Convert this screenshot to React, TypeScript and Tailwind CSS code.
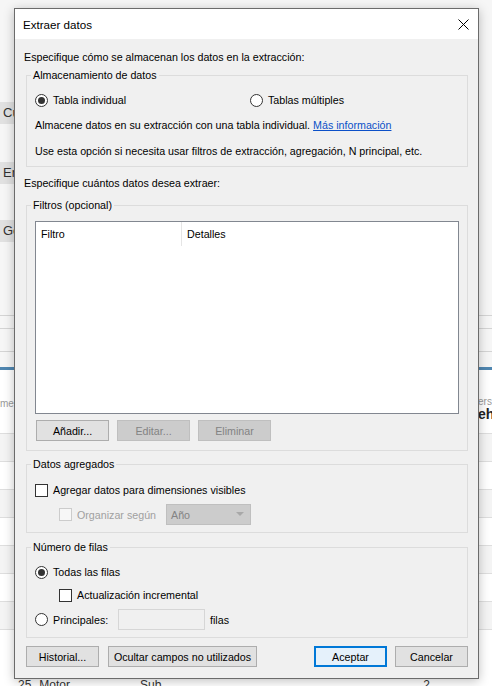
import React from "react";

const font = { fontFamily: '"Liberation Sans", Arial, sans-serif' };

function Radio({ checked }: { checked?: boolean }) {
  return (
    <span className="flex h-[13px] w-[13px] shrink-0 items-center justify-center rounded-full border border-[#333333] bg-white">
      {checked && <span className="h-[7px] w-[7px] rounded-full bg-[#333333]" />}
    </span>
  );
}

function Check({ disabled }: { disabled?: boolean }) {
  return (
    <span
      className={
        disabled
          ? "h-[13px] w-[13px] shrink-0 border border-[#cccccc] bg-[#f7f7f7]"
          : "h-[13px] w-[13px] shrink-0 border border-[#333333] bg-white"
      }
    />
  );
}

function Btn({ label, w, disabled, primary }: { label: string; w: string; disabled?: boolean; primary?: boolean }) {
  let cls = "border-[#adadad] bg-[#e1e1e1] text-black";
  if (disabled) cls = "border-[#bfbfbf] bg-[#cccccc] text-[#838383]";
  if (primary) cls = "border-2 border-[#0078d7] bg-[#e5f1fb] text-black";
  return (
    <div className={`flex h-[21px] shrink-0 items-center justify-center border ${cls} ${w}`}>
      <span>{label}</span>
    </div>
  );
}

function Group({ title, className, children }: { title: string; className?: string; children: React.ReactNode }) {
  return (
    <fieldset className={`mx-[2px] border border-[#dcdcdc] px-[8px] ${className ?? ""}`}>
      <legend className="-ml-[4px] h-[16px] px-[2px] leading-[16px]">{title}</legend>
      {children}
    </fieldset>
  );
}

// pestañas de la ventana de fondo, tapadas casi del todo por el diálogo
function SideTab({ label }: { label: string }) {
  return (
    <div className="flex h-[22px] items-center">
      <div className="flex h-full w-[14px] items-center overflow-hidden whitespace-nowrap bg-[#e1e1e1] pl-[3px]">
        {label}
      </div>
    </div>
  );
}

function Background() {
  return (
    <div className="flex flex-col text-[13px] text-[#333]">
      <div className="h-[102px]" />
      <SideTab label="Cu" />
      <div className="h-[38px]" />
      <SideTab label="En" />
      <div className="h-[36px]" />
      <SideTab label="Ge" />
      <div className="h-[73px]" />
      <div className="h-[13px] border-t border-[#d4d4d4]" />
      <div className="h-[23px] border-t border-[#d4d4d4]" />
      <div className="h-[16px] border-t border-[#d4d4d4]" />
      <div className="h-[3px] bg-[#4f86b0]" />
      <div className="flex h-[63px] bg-white">
        <div className="w-[14px] overflow-hidden pt-[26px] text-[10px] text-[#9a9a9a]">me</div>
        <div className="flex-1" />
        <div className="w-[14px] overflow-hidden pt-[26px] leading-[12px]">
          <div className="text-[10px] text-[#9a9a9a]">ers</div>
          <div className="text-[14px] font-bold text-[#222]">eh</div>
        </div>
      </div>
      <div className="h-[28px] border-t border-[#dedede] bg-[#f4f4f4]" />
      <div className="h-[28px] border-t border-[#dedede] bg-white" />
      <div className="h-[28px] border-t border-[#dedede] bg-[#f4f4f4]" />
      <div className="h-[28px] border-t border-[#dedede] bg-white" />
      <div className="h-[28px] border-t border-[#dedede] bg-[#f4f4f4]" />
      <div className="h-[28px] border-t border-[#dedede] bg-white" />
      <div className="h-[28px] border-t border-[#dedede] bg-[#f4f4f4]" />
      <div className="h-[28px] border-t border-[#dedede] bg-white" />
      <div className="flex h-[40px] items-start bg-white pt-[22px] text-[12px] leading-[12px]">
        <span className="ml-[18px]">25</span>
        <span className="ml-[8px]">Motor</span>
        <span className="ml-[70px]">Sub</span>
        <span className="ml-auto mr-[62px]">2</span>
      </div>
    </div>
  );
}

export default function App() {
  return (
    <div className="relative h-[686px] w-[492px] overflow-hidden bg-[#f6f6f6]" style={font}>
      <Background />

      <div className="absolute left-[14px] top-[8px] flex h-[671px] w-[465px] flex-col border border-[#6b6b6b] bg-[#f0f0f0] text-[10.7px] leading-[16px] text-black shadow-[0_2px_10px_rgba(0,0,0,0.25)]">
        <div className="flex h-[30px] shrink-0 items-center justify-between bg-white pl-[8px] pr-[9px]">
          <span className="pt-[1px] text-[11.6px]">Extraer datos</span>
          <svg width="11" height="11" viewBox="0 0 11 11">
            <path d="M0.5 0.5 10.5 10.5M10.5 0.5 0.5 10.5" stroke="#000" strokeWidth="1" />
          </svg>
        </div>

        <div className="flex flex-1 flex-col pl-[9px] pr-[8px] pt-[10px]">
          <div className="h-[16px]">Especifique cómo se almacenan los datos en la extracción:</div>

          <Group title="Almacenamiento de datos" className="mt-[2px] pb-[7px]">
            <div className="mt-[9px] flex h-[16px] items-center">
              <div className="flex w-[215px] items-center gap-[5px]">
                <Radio checked />
                <span>Tabla individual</span>
              </div>
              <div className="flex items-center gap-[5px]">
                <Radio />
                <span>Tablas múltiples</span>
              </div>
            </div>
            <div className="mt-[9px] h-[16px]">
              Almacene datos en su extracción con una tabla individual.{" "}
              <span className="text-[#0b50c8] underline">Más información</span>
            </div>
            <div className="mt-[10px] h-[16px]">
              Use esta opción si necesita usar filtros de extracción, agregación, N principal, etc.
            </div>
          </Group>

          <div className="mt-[8px] h-[16px]">Especifique cuántos datos desea extraer:</div>

          <Group title="Filtros (opcional)" className="mt-[6px] pb-[9px]">
            <div className="mt-[8px] flex h-[193px] flex-col border border-[#828790] bg-white">
              <div className="flex h-[24px] items-center">
                <div className="flex h-full w-[146px] items-center border-r border-[#e5e5e5] pl-[5px]">Filtro</div>
                <div className="pl-[5px]">Detalles</div>
              </div>
            </div>
            <div className="mt-[6px] flex gap-[8px] pl-[1px]">
              <Btn label="Añadir..." w="w-[73px]" />
              <Btn label="Editar..." w="w-[73px]" disabled />
              <Btn label="Eliminar" w="w-[73px]" disabled />
            </div>
          </Group>

          <Group title="Datos agregados" className="mt-[5px] pb-[7px]">
            <div className="mt-[10px] flex h-[16px] items-center gap-[5px]">
              <Check />
              <span>Agregar datos para dimensiones visibles</span>
            </div>
            <div className="mt-[6px] flex h-[21px] items-center pl-[24px]">
              <Check disabled />
              <span className="ml-[5px] w-[89px] text-[#a0a0a0]">Organizar según</span>
              <div className="flex h-[21px] w-[85px] items-center justify-between border border-[#bfbfbf] bg-[#cccccc] pl-[4px] pr-[6px] text-[#838383]">
                <span>Año</span>
                <svg width="8" height="5" viewBox="0 0 8 5">
                  <path d="M0 0h8L4 4z" fill="#a8a8a8" />
                </svg>
              </div>
            </div>
          </Group>

          <Group title="Número de filas" className="mt-[6px] pb-[7px]">
            <div className="mt-[9px] flex h-[16px] items-center gap-[5px]">
              <Radio checked />
              <span>Todas las filas</span>
            </div>
            <div className="mt-[7px] flex h-[16px] items-center gap-[5px] pl-[24px]">
              <Check />
              <span>Actualización incremental</span>
            </div>
            <div className="mt-[6px] flex h-[21px] items-center">
              <Radio />
              <span className="ml-[5px] w-[65px]">Principales:</span>
              <div className="h-[21px] w-[87px] border border-[#d6d6d6] bg-[#f0f0f0]" />
              <span className="ml-[5px]">filas</span>
            </div>
          </Group>

          <div className="mx-[2px] mt-[8px] flex">
            <Btn label="Historial..." w="w-[73px]" />
            <Btn label="Ocultar campos no utilizados" w="ml-[9px] w-[149px]" />
            <div className="flex-1" />
            <Btn label="Aceptar" w="w-[73px]" primary />
            <Btn label="Cancelar" w="ml-[8px] w-[73px]" />
          </div>
        </div>
      </div>
    </div>
  );
}
